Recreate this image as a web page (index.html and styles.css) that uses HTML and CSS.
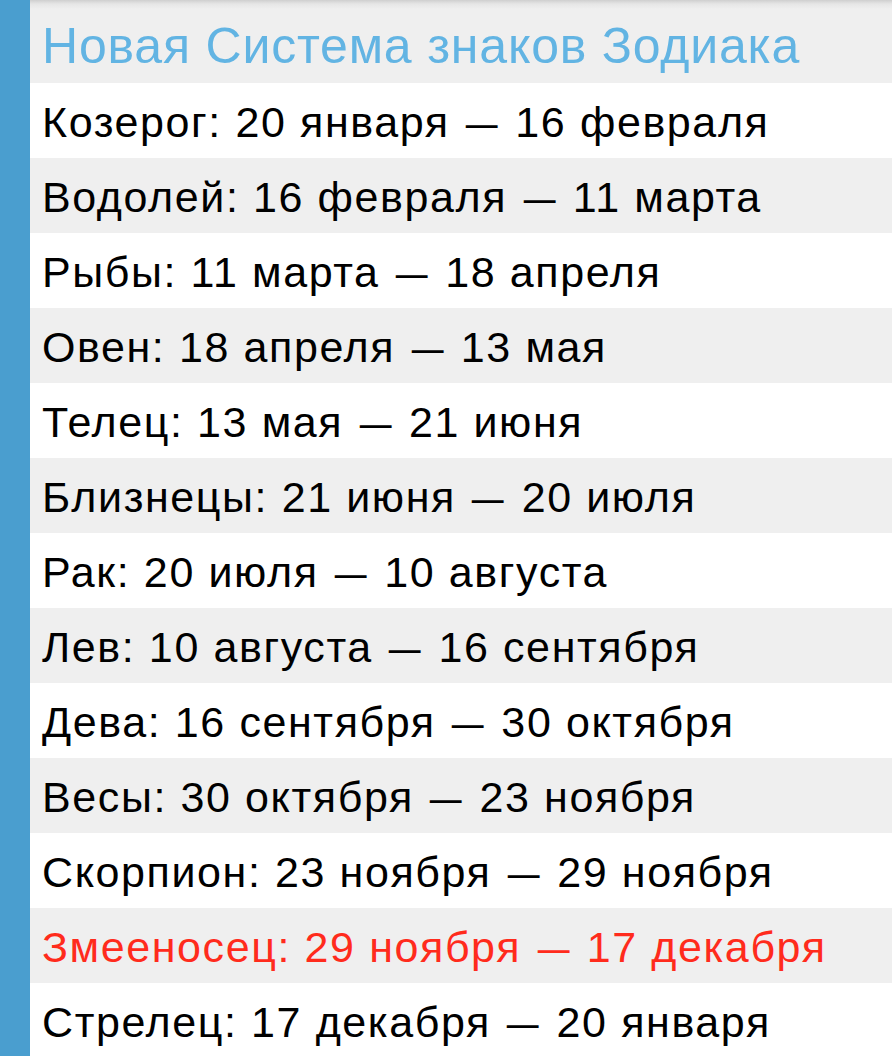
FILE: index.html
```html
<!DOCTYPE html>
<html>
<head>
<meta charset="utf-8">
<link rel="stylesheet" href="styles.css">
</head>
<body>
<div class="page">
  <div class="bar"></div>
  <div class="content">
    <div class="title">Новая Система знаков Зодиака</div>
    <div class="row">Козерог: 20 января <span class="dash">—</span> 16 февраля</div>
    <div class="row alt">Водолей: 16 февраля <span class="dash">—</span> 11 марта</div>
    <div class="row">Рыбы: 11 марта <span class="dash">—</span> 18 апреля</div>
    <div class="row alt">Овен: 18 апреля <span class="dash">—</span> 13 мая</div>
    <div class="row">Телец: 13 мая <span class="dash">—</span> 21 июня</div>
    <div class="row alt">Близнецы: 21 июня <span class="dash">—</span> 20 июля</div>
    <div class="row">Рак: 20 июля <span class="dash">—</span> 10 августа</div>
    <div class="row alt">Лев: 10 августа <span class="dash">—</span> 16 сентября</div>
    <div class="row">Дева: 16 сентября <span class="dash">—</span> 30 октября</div>
    <div class="row alt">Весы: 30 октября <span class="dash">—</span> 23 ноября</div>
    <div class="row">Скорпион: 23 ноября <span class="dash">—</span> 29 ноября</div>
    <div class="row alt red">Змееносец: 29 ноября <span class="dash">—</span> 17 декабря</div>
    <div class="row">Стрелец: 17 декабря <span class="dash">—</span> 20 января</div>
  </div>
</div>
</body>
</html>
```
FILE: styles.css
```css
html, body {
  margin: 0;
  padding: 0;
  background: #fff;
  overflow: hidden;
}
.page {
  display: flex;
  height: 1056px;
  overflow: hidden;
  font-family: "Liberation Sans", Arial, sans-serif;
}
.bar {
  width: 30px;
  flex: none;
  background: #4a9ecf;
}
.content {
  flex: 1;
  display: flex;
  flex-direction: column;
}
.title {
  height: 83px;
  flex: none;
  box-sizing: border-box;
  padding: 19px 0 0 12px;
  background: linear-gradient(#cfcfcf 0px, #e6e6e6 4px, #efefef 9px, #efefef 100%);
  color: #62b4e3;
  font-size: 50px;
  line-height: 54px;
  letter-spacing: 0.8px;
  white-space: nowrap;
}
.row {
  height: 75px;
  flex: none;
  box-sizing: border-box;
  padding: 4px 0 0 12px;
  display: flex;
  align-items: center;
  font-size: 43px;
  letter-spacing: 1.6px;
  color: #000;
  white-space: pre;
  background: #fff;
}
.dash {
  display: inline-block;
  transform: scaleX(0.74);
  margin: 0 -3px;
}
.row.alt {
  background: #efefef;
}
.row.red {
  color: #ff2b1c;
}
```
